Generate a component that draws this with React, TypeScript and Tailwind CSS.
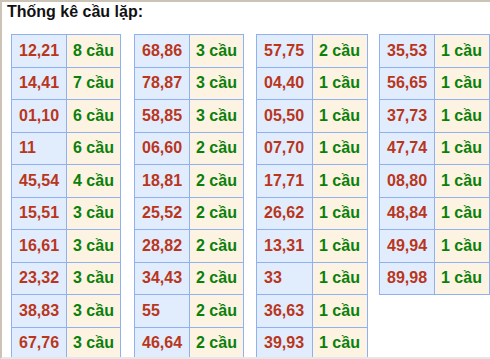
import React from "react";

type Row = [string, string];

const tables: { ml: string; w1: string; w2: string; rows: Row[] }[] = [
  {
    ml: "ml-0",
    w1: "w-[55px]",
    w2: "w-[54px]",
    rows: [
      ["12,21", "8 cầu"],
      ["14,41", "7 cầu"],
      ["01,10", "6 cầu"],
      ["11", "6 cầu"],
      ["45,54", "4 cầu"],
      ["15,51", "3 cầu"],
      ["16,61", "3 cầu"],
      ["23,32", "3 cầu"],
      ["38,83", "3 cầu"],
      ["67,76", "3 cầu"],
    ],
  },
  {
    ml: "ml-[13px]",
    w1: "w-[55px]",
    w2: "w-[54px]",
    rows: [
      ["68,86", "3 cầu"],
      ["78,87", "3 cầu"],
      ["58,85", "3 cầu"],
      ["06,60", "2 cầu"],
      ["18,81", "2 cầu"],
      ["25,52", "2 cầu"],
      ["28,82", "2 cầu"],
      ["34,43", "2 cầu"],
      ["55", "2 cầu"],
      ["46,64", "2 cầu"],
    ],
  },
  {
    ml: "ml-[12px]",
    w1: "w-[56px]",
    w2: "w-[55px]",
    rows: [
      ["57,75", "2 cầu"],
      ["04,40", "1 cầu"],
      ["05,50", "1 cầu"],
      ["07,70", "1 cầu"],
      ["17,71", "1 cầu"],
      ["26,62", "1 cầu"],
      ["13,31", "1 cầu"],
      ["33", "1 cầu"],
      ["36,63", "1 cầu"],
      ["39,93", "1 cầu"],
    ],
  },
  {
    ml: "ml-[11px]",
    w1: "w-[55px]",
    w2: "w-[55px]",
    rows: [
      ["35,53", "1 cầu"],
      ["56,65", "1 cầu"],
      ["37,73", "1 cầu"],
      ["47,74", "1 cầu"],
      ["08,80", "1 cầu"],
      ["48,84", "1 cầu"],
      ["49,94", "1 cầu"],
      ["89,98", "1 cầu"],
    ],
  },
];

export default function App() {
  return (
    <div className="w-[490px] h-[359px] overflow-hidden bg-white border-t-2 border-l-2 border-b-2 border-t-[#cbc3b6] border-l-[#cbc3b6] border-b-[#e6e6e6] font-['Liberation_Sans',Arial,sans-serif]">
      <div className="h-[32px] pl-[5px] pt-px text-[16px] leading-[18px] font-bold text-[#111]">
        Thống kê cầu lặp:
      </div>
      <div className="flex items-start pl-[9px]">
        {tables.map((t, i) => (
          <div key={i} className={`shrink-0 border-l border-t border-[#8fb1f2] ${t.ml}`}>
            {t.rows.map((r, j) => (
              <div key={j} className="flex h-[32.5px]">
                <div
                  className={`flex items-center pl-[7px] bg-[#e1edfd] border-r border-b border-[#8fb1f2] text-[16px] font-bold text-[#b9361c] ${t.w1}`}
                >
                  {r[0]}
                </div>
                <div
                  className={`flex items-center pl-[6px] bg-[#fdf3e3] border-r border-b border-[#8fb1f2] text-[16px] font-bold text-[#0a800a] ${t.w2}`}
                >
                  {r[1]}
                </div>
              </div>
            ))}
          </div>
        ))}
      </div>
    </div>
  );
}
